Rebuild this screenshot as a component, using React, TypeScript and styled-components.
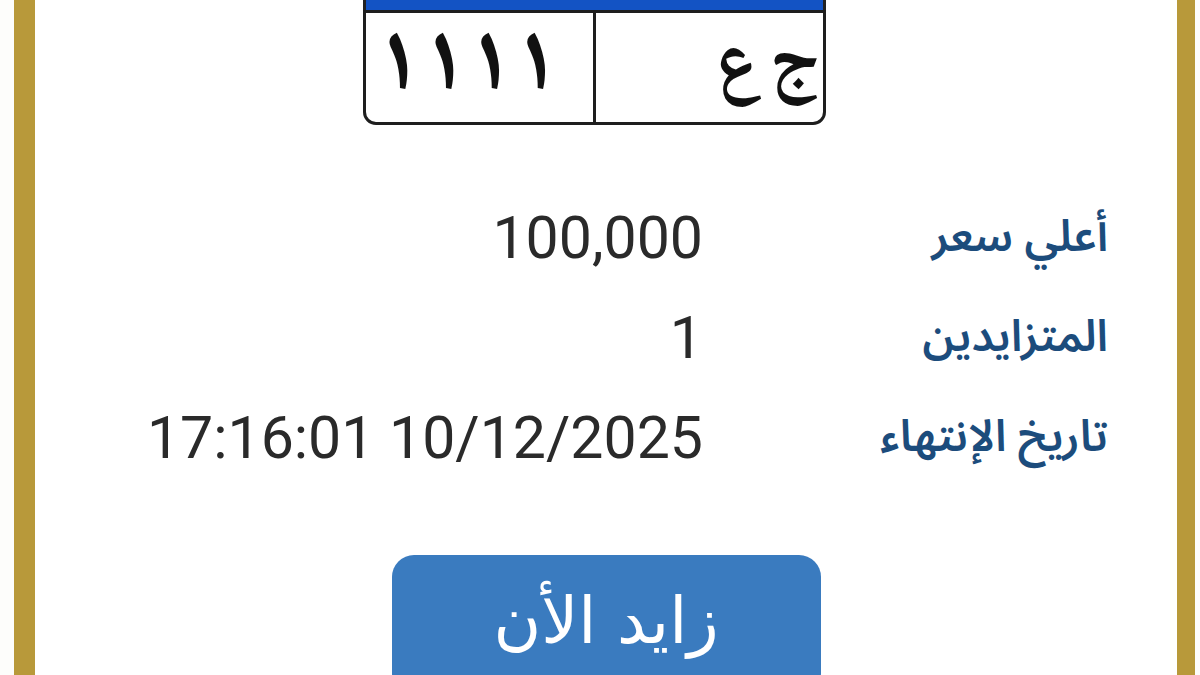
import React from "react";
import styled, { createGlobalStyle } from "styled-components";

const Global = createGlobalStyle`
  html, body { margin: 0; padding: 0; background: #fdfdfb; overflow: hidden; }
  #root { height: 675px; }
`;

const Frame = styled.div`
  height: 675px;
  margin: 0 5px 0 14px;
  border-left: 21px solid #b8993a;
  border-right: 18px solid #b8993a;
  background: #ffffff;
  display: flex;
  flex-direction: column;
  align-items: center;
  box-sizing: border-box;
`;

const Plate = styled.div`
  width: 463px;
  margin-right: 23px;
  display: flex;
  flex-direction: column;
`;

const PlateBand = styled.div`
  height: 10px;
  background: #1353c4;
  border-left: 3px solid #222;
  border-right: 3px solid #222;
`;

const PlateBody = styled.div`
  height: 115px;
  display: flex;
  direction: ltr;
  border: 3px solid #1e1e1e;
  border-radius: 0 0 13px 13px;
  box-sizing: border-box;
  background: #fff;
`;

const PlateCell = styled.div<{ $align: "left" | "right"; $divider?: boolean }>`
  box-sizing: border-box;
  ${(p) => (p.$divider ? "width: 230px; flex-shrink: 0;" : "flex: 1 1 0; min-width: 0;")}
  display: flex;
  align-items: center;
  justify-content: ${(p) => (p.$align === "left" ? "flex-start" : "flex-end")};
  padding: ${(p) => (p.$align === "left" ? "0 0 0 10px" : "0 4px 0 0")};
  border-right: ${(p) => (p.$divider ? "3px solid #1e1e1e" : "none")};
  font-family: "Noto Naskh Arabic", "Noto Sans Arabic", "DejaVu Sans", sans-serif;
  font-weight: bold;
  color: #111;
`;

const PlateDigits = styled.span`
  display: flex;
  direction: rtl;
  margin-top: 4px;
  gap: 0;
`;

const PlateDigit = styled.span`
  min-width: 45px;
  text-align: center;
  font-size: 94px;
  line-height: 1.1;
`;

const PlateLetters = styled.span`
  font-size: 76px;
  line-height: 1.1;
  direction: rtl;
  word-spacing: -8px;
`;

const Info = styled.div`
  align-self: stretch;
  direction: rtl;
  padding: 62px 69px 0 0;
  display: flex;
  flex-direction: column;
`;

const Row = styled.div`
  height: 100px;
  display: grid;
  grid-template-columns: 405px 1fr;
  align-items: center;
`;

const Label = styled.div`
  font-family: "Noto Sans Arabic", "Noto Naskh Arabic", "DejaVu Sans", sans-serif;
  font-weight: 600;
  font-size: 44px;
  color: #1c4c7c;
  text-align: right;
`;

const Value = styled.div`
  font-family: Roboto, "Liberation Sans", sans-serif;
  font-size: 59px;
  color: #2a2a2a;
  text-align: right;
  direction: ltr;
  unicode-bidi: plaintext;
  white-space: nowrap;
`;

const BidButton = styled.button`
  margin-top: 68px;
  width: 429px;
  height: 140px;
  flex-shrink: 0;
  border: none;
  border-radius: 22px;
  background: #3a7bbf;
  color: #fff;
  font-family: "DejaVu Sans", "Noto Sans", sans-serif;
  font-size: 65px;
  display: flex;
  justify-content: center;
  align-items: flex-start;
  padding-top: 28px;
  direction: rtl;
`;

const rows = [
  { label: "أعلي سعر", value: "100,000" },
  { label: "المتزايدين", value: "1" },
  { label: "تاريخ الإنتهاء", value: "17:16:01 10/12/2025" },
];

const plateDigits = ["١", "١", "١", "١"];

export default function App() {
  return (
    <>
      <Global />
      <Frame>
        <Plate>
          <PlateBand />
          <PlateBody>
            <PlateCell $align="left" $divider>
              <PlateDigits>
                {plateDigits.map((d, i) => (
                  <PlateDigit key={i}>{d}</PlateDigit>
                ))}
              </PlateDigits>
            </PlateCell>
            <PlateCell $align="right">
              <PlateLetters>ج ع</PlateLetters>
            </PlateCell>
          </PlateBody>
        </Plate>
        <Info>
          {rows.map((r) => (
            <Row key={r.label}>
              <Label>{r.label}</Label>
              <Value>{r.value}</Value>
            </Row>
          ))}
        </Info>
        <BidButton>زايد الأن</BidButton>
      </Frame>
    </>
  );
}
